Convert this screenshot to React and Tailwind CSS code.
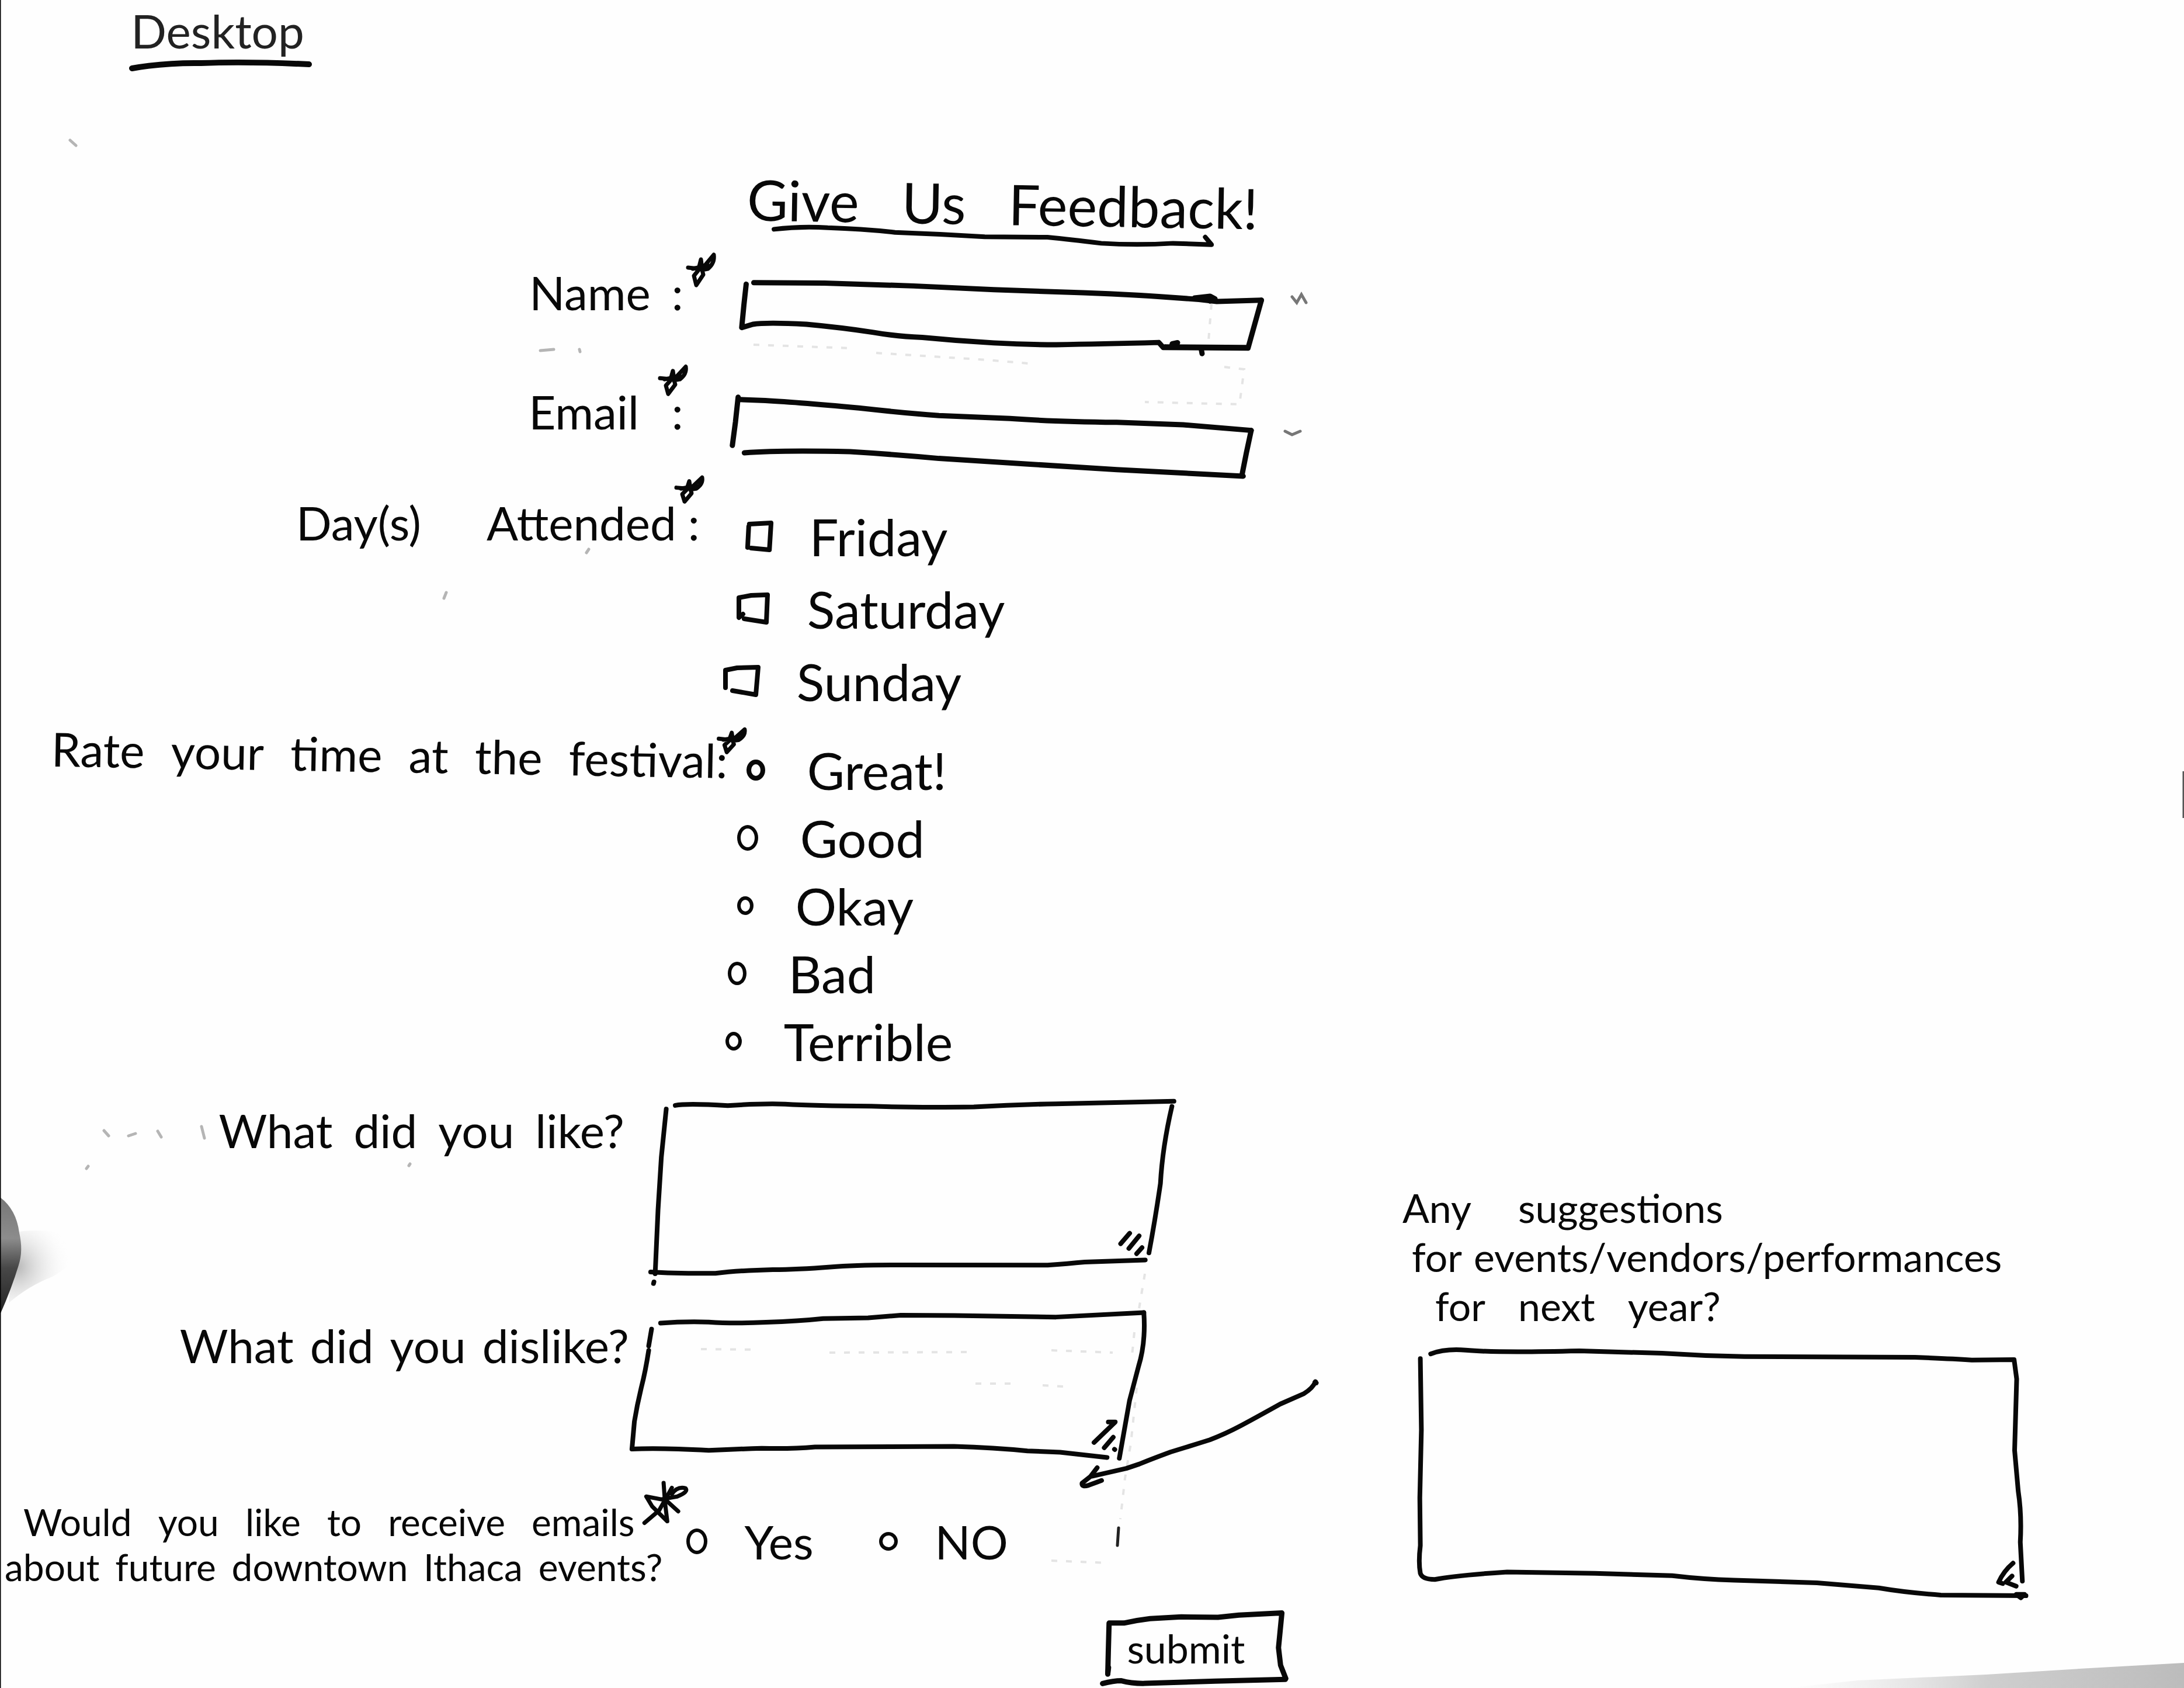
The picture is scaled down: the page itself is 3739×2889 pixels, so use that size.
import React from "react";

/* A group of pen strokes, stretched over the box of its parent. */
function Ink({ box, lines, width = 8, className = "absolute inset-0 h-full w-full" }) {
  return (
    <svg
      className={`pointer-events-none overflow-visible ${className}`}
      viewBox={box}
      preserveAspectRatio="none"
      fill="none"
      stroke="#080808"
      strokeWidth={width}
      strokeLinecap="round"
      strokeLinejoin="round"
      aria-hidden="true"
    >
      {lines.map((d) => (
        <path key={d} d={d} vectorEffect="non-scaling-stroke" />
      ))}
    </svg>
  );
}

const NAME_FRAME = [
  "M165 617L160 710L155 815L180 800Q210 790 300 800Q380 815 450 837Q500 855 560 860Q640 876 720 885Q790 893 860 893Q960 890 1090 883L1100 906L1290 909L1320 690",
  "M182 610L340 612Q440 618 540 625L720 642L920 656Q1050 665 1180 687L1220 696L1320 690",
  "M1120 889L1132 884M1105 903L1285 906M1170 680L1205 672L1216 684L1205 694M1185 912L1187 934",
];
const EMAIL_FRAME = [
  "M148 1120L142 1230L135 1335",
  "M148 1130L200 1134Q270 1140 420 1168Q520 1190 600 1202L760 1215Q850 1228 1000 1232L1150 1243L1303 1268",
  "M1303 1268L1292 1370L1282 1470",
  "M162 1368Q240 1356 400 1363Q500 1375 600 1393L800 1418L1000 1443L1285 1472",
];
const LIKE_FRAME = [
  "M200 115L188 300L180 500L173 745M170 776L169 782",
  "M222 101Q250 92 350 102Q430 93 490 96Q560 102 700 104Q800 110 950 107Q1050 98 1150 95L1438 85",
  "M1433 105Q1410 260 1405 400Q1392 540 1377 665",
  "M162 738Q220 744 320 743Q380 732 460 729Q520 729 600 719Q660 711 760 711L1130 712Q1180 706 1220 700L1368 692",
  "M1330 590L1308 630M1353 600L1328 648M1360 645L1347 668",
];
const DISLIKE_FRAME = [
  "M160 948L153 1012M153 1029Q145 1110 135 1170L125 1240L118 1300L112 1405",
  "M182 925Q240 918 300 921Q360 928 440 922Q520 918 580 908L690 905L770 895L900 896L1150 902Q1230 895 1365 885",
  "M1365 885Q1370 1000 1352 1090L1330 1220L1305 1440",
  "M112 1405Q180 1400 300 1410Q370 1405 430 1402Q500 1405 560 1397L900 1395Q1000 1400 1080 1412L1160 1417L1275 1437",
  "M1278 1302L1295 1302L1243 1380M1290 1360L1268 1400M1293 1406L1294 1407",
];
const SUGGEST_FRAME = [
  "M112 576Q140 560 180 565Q240 573 400 567L560 574Q640 582 720 584L1050 586Q1120 590 1160 594L1242 593L1247 650L1243 860L1250 980Q1257 1050 1254 1130L1258 1245",
  "M92 590L94 800L91 1000L92 1140Q88 1190 92 1222Q96 1240 120 1240Q160 1228 260 1218L430 1222L580 1229Q640 1240 700 1242L860 1250L980 1265Q1030 1278 1100 1286L1265 1288",
  "M1240 1192Q1222 1215 1212 1248L1220 1252M1238 1230L1226 1248L1246 1260M1246 1284L1262 1284L1255 1294Z",
];
const SUBMIT_FRAME = [
  "M438 1500L440 1400L443 1268L500 1268Q550 1255 600 1248L720 1240L860 1242L940 1232L1105 1222L1092 1380L1100 1460L1120 1520",
  "M418 1543Q460 1530 490 1530Q530 1543 580 1542L850 1532L1118 1524",
  "M441 1470L438 1496",
];

const STARS = {
  small: {
    box: "0 0 52 58",
    lines: ["M4 26L22 28L26 12L28 28L48 4Q50 18 38 28L28 30L30 38L18 56L14 40L22 30", "M12 28L38 22"],
    width: 7,
  },
  large: {
    box: "1320 235 110 215",
    lines: [
      "M1370 246L1373 340L1378 432L1345 360L1332 312L1365 326L1400 312Q1425 290 1418 272Q1400 262 1388 300",
      "M1328 440L1360 380L1388 270M1378 336L1402 384",
    ],
    width: 7,
  },
};

function Star({ kind = "small", className }) {
  return (
    <span role="img" aria-label="required" className={`absolute ${className}`}>
      <Ink {...STARS[kind]} />
    </span>
  );
}

/* One line of a label, its words spread over the width that it is given. */
function Words({ text, className }) {
  return (
    <span className={`flex ${className}`}>
      {text.split(" ").map((word, i) => (
        <span key={i}>{word}</span>
      ))}
    </span>
  );
}

const BOXES = [
  { day: "Friday", pad: "pl-11", size: "h-[50px] w-11", box: "0 0 46 50", lines: ["M4 8L2 44", "M5 4L44 2L41 48L8 45"] },
  { day: "Saturday", pad: "pl-7", size: "h-[54px] w-14", box: "0 0 56 54", lines: ["M10 36L3 42L3 8L24 4L52 3L50 50L12 44"] },
  { day: "Sunday", pad: "pl-1", size: "h-[54px] w-[62px]", box: "0 0 62 54", lines: ["M4 38L4 8L24 4L60 3L56 50L16 43"] },
];

const RATINGS = [
  { name: "Great!", pad: "pl-11", size: "h-9 w-8 border-8" },
  { name: "Good", pad: "pl-7", size: "h-11 w-9 border-[6px]" },
  { name: "Okay", pad: "pl-7", size: "h-8 w-7 border-[6px]" },
  { name: "Bad", pad: "pl-3", size: "h-10 w-8 border-[6px]" },
  { name: "Terrible", pad: "pl-2", size: "h-8 w-7 border-[6px]" },
];

function Radio({ name, size }) {
  return <input type="radio" name={name} className={`shrink-0 appearance-none rounded-[50%] border-[#080808] checked:bg-[#080808] ${size}`} />;
}

/* Shadows, a fingertip at the edge and rubbed-out pencil on the paper. */
function Paper() {
  return (
    <svg className="pointer-events-none absolute inset-0 h-full w-full" viewBox="0 0 3739 2889" preserveAspectRatio="none" fill="none" aria-hidden="true">
      <defs>
        <linearGradient id="finger" x1="0" y1="0" x2="0" y2="1">
          <stop offset="0" stopColor="#777" />
          <stop offset="0.35" stopColor="#8c8c8c" />
          <stop offset="0.6" stopColor="#484848" />
          <stop offset="1" stopColor="#222" />
        </linearGradient>
        <radialGradient id="shade" cx="0.1" cy="0.5" r="0.8">
          <stop offset="0" stopColor="#b4b4b4" />
          <stop offset="1" stopColor="#fefefe" stopOpacity="0" />
        </radialGradient>
        <linearGradient id="wedge" x1="0" y1="0" x2="1" y2="0">
          <stop offset="0" stopColor="#e4e4e4" stopOpacity="0" />
          <stop offset="0.5" stopColor="#cfcfcf" />
          <stop offset="1" stopColor="#bcbcbc" />
        </linearGradient>
      </defs>
      <path d="M20 2110Q70 2100 130 2115Q150 2150 90 2185Q50 2200 15 2230Z" fill="url(#shade)" />
      <path d="M0 2049Q28 2070 33 2110Q40 2140 32 2165Q20 2205 0 2250Z" fill="url(#finger)" />
      <path d="M3060 2889L3180 2876L3400 2866L3560 2856L3739 2846V2889Z" fill="url(#wedge)" />
      <path d="M0 0V2889" stroke="#000" strokeWidth="3" />
      <path d="M3738 1320V1400" stroke="#555" strokeWidth="3" />
      <g stroke="#b5b5b5" strokeWidth="5" strokeLinecap="round">
        <path d="M120 240L130 249M925 600L948 598M992 598L993 602" />
        <path d="M2212 508L2220 518L2228 504L2236 518M2200 738L2212 744L2226 738" stroke="#777" />
        <path d="M178 1935L186 1944M220 1944L232 1940M270 1936L276 1946M345 1928L350 1948M148 2000L151 1996M700 1995L702 1992" />
        <path d="M760 1024L764 1014M1004 946L1008 940" />
      </g>
      <g stroke="#e4e4e4" strokeWidth="4" strokeDasharray="10 15">
        <path d="M1290 590L1460 596M1500 604L1690 616L1760 622" />
        <path d="M2096 628L2130 632L2122 692L1960 688" />
        <path d="M2074 520L2068 595" />
        <path d="M1960 2180L1950 2240M1942 2280L1938 2320M1946 2375L1936 2470L1926 2530L1918 2600" />
        <path d="M1200 2309L1300 2310M1420 2315L1660 2314M1800 2311L1905 2315M1670 2368L1730 2368M1785 2371L1820 2373" />
        <path d="M1800 2671L1900 2675" />
      </g>
      <path d="M1915 2615L1913 2645" stroke="#222" strokeWidth="5" strokeLinecap="round" />
    </svg>
  );
}

export default function App() {
  return (
    <div className="relative flex min-h-screen flex-col bg-[#fefefe] font-['Lato','Open_Sans',sans-serif] text-[80px] leading-none whitespace-nowrap text-[#080808]">
      <Paper />

      <header className="relative pt-3 pl-[6%]">
        <p className="text-[#222]">Desktop</p>
        <Ink box="0 0 308 16" lines={["M2 13Q60 3 120 4Q200 1 305 6"]} width={10} className="mt-3 h-4 w-[308px]" />
      </header>

      <main className="relative flex flex-1">
        <form className="w-3/5 pt-[180px]" onSubmit={(e) => e.preventDefault()}>
          <div className="ml-[57%] w-[39%]">
            <h1 className="flex rotate-1 justify-between text-[96px]">
              <span>Give</span>
              <span>Us</span>
              <span>Feedback!</span>
            </h1>
            <Ink
              box="170 345 1140 105"
              lines={["M230 367Q290 352 350 360Q430 365 500 381Q600 388 700 401L840 403Q890 413 960 430Q1040 440 1120 430L1206 436L1192 402"]}
              className="-mt-3 h-10 w-full"
            />
          </div>

          <div className="mt-14 flex">
            <label htmlFor="name" className="-mt-5 flex w-[55%] justify-end gap-9 pr-16">
              <span>Name</span>
              <span className="relative">
                :
                <Star className="-top-7 left-6 h-[58px] w-[52px]" />
              </span>
            </label>
            <div className="relative ml-8 h-[120px] w-2/5">
              <Ink box="150 600 1175 320" lines={NAME_FRAME} width={9} />
              <input id="name" type="text" required className="relative h-full w-full bg-transparent px-8 outline-none" />
            </div>
          </div>

          <div className="mt-[76px] flex">
            <label htmlFor="email" className="-mt-3 flex w-[55%] justify-end gap-14 pr-16">
              <span>Email</span>
              <span className="relative">
                :
                <Star className="-top-10 -left-6 h-[52px] w-[52px]" />
              </span>
            </label>
            <div className="relative ml-4 h-[142px] w-2/5">
              <Ink box="130 1110 1180 370" lines={EMAIL_FRAME} width={9} />
              <input id="email" type="email" required className="relative h-full w-full bg-transparent px-8 outline-none" />
            </div>
          </div>

          <div className="mt-9 flex" role="group" aria-labelledby="days">
            <div id="days" className="flex w-[55%] justify-end pr-9">
              <span className="mr-28">Day(s)</span>
              <span className="mr-5">Attended</span>
              <span className="relative">
                :
                <Star className="-top-10 -left-6 h-[46px] w-[52px]" />
              </span>
            </div>
            <div className="flex flex-col gap-9 pt-5 text-[88px]">
              {BOXES.map(({ day, pad, size, box, lines }) => (
                <label key={day} className={`flex items-center gap-16 ${pad}`}>
                  <span className={`relative shrink-0 ${size}`}>
                    <input type="checkbox" name="days" value={day} className="block h-full w-full appearance-none checked:bg-[#080808]" />
                    <Ink box={box} lines={lines} />
                  </span>
                  {day}
                </label>
              ))}
            </div>
          </div>

          <div className="mt-10 flex" role="radiogroup" aria-labelledby="rate">
            <div id="rate" className="w-[55%]">
              <p className="-mr-3 flex h-20 rotate-1 justify-between pl-[88px]">
                <span>Rate</span>
                <span>your</span>
                <span>time</span>
                <span>at</span>
                <span>the</span>
                <span className="relative">
                  festival:
                  <Star className="-top-4 -right-8 h-[44px] w-[52px]" />
                </span>
              </p>
            </div>
            <div className="flex flex-col gap-7 pt-6 text-[88px]">
              {RATINGS.map(({ name, pad, size }) => (
                <label key={name} className={`flex items-center gap-[72px] ${pad}`}>
                  <Radio name="rating" size={size} />
                  {name}
                </label>
              ))}
            </div>
          </div>

          <div className="mt-[52px] flex">
            <label htmlFor="like" className="flex w-[48%] justify-end pt-4 pr-2">
              <Words text="What did you like?" className="gap-9" />
            </label>
            <div className="relative ml-8 h-80 w-[41%]">
              <Ink box="155 70 1310 715" lines={LIKE_FRAME} />
              <textarea id="like" className="relative block h-full w-full resize-none bg-transparent p-8 outline-none" />
            </div>
          </div>

          <div className="mt-11 flex">
            <label htmlFor="dislike" className="flex w-[48%] justify-end pt-5">
              <Words text="What did you dislike?" className="gap-7" />
            </label>
            <div className="relative h-64 w-2/5">
              <Ink box="105 875 1283 570" lines={DISLIKE_FRAME} />
              <textarea id="dislike" className="relative block h-full w-full resize-none bg-transparent p-8 outline-none" />
            </div>
          </div>

          <div className="mt-[68px] flex" role="radiogroup" aria-labelledby="news">
            <div id="news" className="relative w-[52%] text-[64px] leading-[77px]">
              <Words text="Would you like to receive emails" className="justify-between pr-20 pl-10" />
              <Words text="about future downtown Ithaca events?" className="justify-between pr-8 pl-2" />
              <Star kind="large" className="-top-8 -right-4 h-[76px] w-[86px]" />
            </div>
            <div className="flex gap-28 pt-8 pl-2">
              <label className="flex h-20 items-center gap-16">
                <Radio name="news" size="h-11 w-9 border-[6px]" />
                Yes
              </label>
              <label className="flex h-20 items-center gap-16">
                <Radio name="news" size="h-8 w-8 border-[6px]" />
                NO
              </label>
            </div>
          </div>

          <div className="relative mt-9 ml-[84%] h-[130px] w-[324px]">
            <Ink box="410 1210 725 345" lines={SUBMIT_FRAME} width={9} />
            <button type="submit" className="relative h-full w-full pr-8 text-[68px]">submit</button>
          </div>
        </form>

        <aside className="relative mb-[148px] ml-[4%] w-[29%] self-end">
          <Ink
            box="330 155 925 500"
            lines={["M1235 170Q1225 200 1190 225L1100 272Q1020 325 950 370Q890 408 830 435Q750 465 680 490Q600 525 560 545L510 565L380 600", "M398 562L372 602L340 632Q338 652 365 642L415 620", "M1233 172L1238 176"]}
            className="absolute top-[334px] right-full mr-[132px] h-[188px] w-[413px]"
          />
          <label htmlFor="suggestions" className="block text-[68px] leading-[84px]">
            <Words text="Any suggestions" className="gap-20 pl-2" />
            <Words text="for events/vendors/performances" className="gap-5 pl-6" />
            <Words text="for next year?" className="gap-14 pl-16" />
          </label>
          <div className="relative mt-7 ml-7 h-[436px]">
            <Ink box="80 555 1195 750" lines={SUGGEST_FRAME} />
            <textarea id="suggestions" className="relative block h-full w-full resize-none bg-transparent p-8 outline-none" />
          </div>
        </aside>
      </main>
    </div>
  );
}
